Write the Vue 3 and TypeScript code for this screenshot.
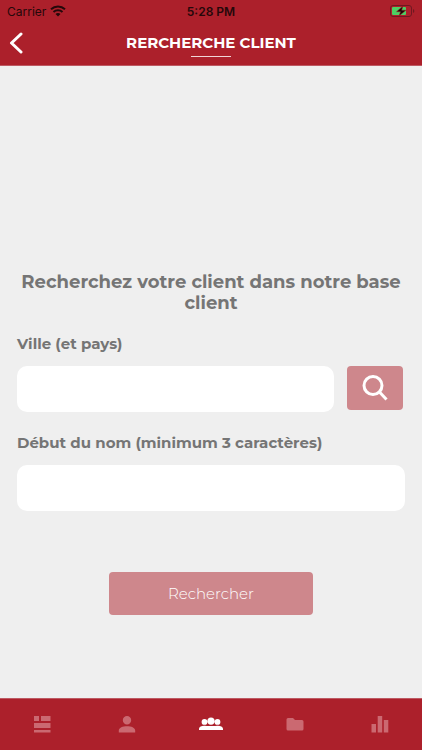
<script setup lang="ts">
import { ref } from 'vue'

interface Tab {
  id: string
  label: string
  path: string
}

const tabs: Tab[] = [
  { id: 'news', label: 'Actualités', path: 'M4 4h5v5H4zM11 4h9.500v5H11zM4 11h16.500v5H4zM4 18h16.500v2.500H4z' },
  {
    id: 'profile',
    label: 'Profil',
    path: 'M12 4a4.200 4.200 0 1 1 0 8.400a4.200 4.200 0 0 1 0-8.400zM3.800 20.500v-2c0-2.800 4-4.300 8.200-4.300s8.200 1.500 8.200 4.300v2z',
  },
  {
    id: 'clients',
    label: 'Clients',
    path: 'M12 5.500a3.600 3.600 0 1 1 0 7.200a3.600 3.600 0 0 1 0-7.200zM5.500 7a2.900 2.900 0 1 1 0 5.800a2.900 2.900 0 0 1 0-5.800zM18.500 7a2.900 2.900 0 1 1 0 5.800a2.900 2.900 0 0 1 0-5.800zM0 18v-1.300C0 14.500 3 13.500 5.800 13.700C7.600 14.100 9.500 14 12 14s4.400.1 6.200-.3C21 13.500 24 14.500 24 16.700V18z',
  },
  {
    id: 'folders',
    label: 'Dossiers',
    path: 'M5 6h5l2 2h7a1.500 1.500 0 0 1 1.500 1.500v7.500a1.500 1.500 0 0 1-1.500 1.500H5A1.500 1.500 0 0 1 3.500 17V7.500A1.500 1.500 0 0 1 5 6z',
  },
  { id: 'stats', label: 'Statistiques', path: 'M3.500 12H8v8.500H3.500zM9.700 4h4.500v16.500H9.700zM15.800 8h4.500v12.500h-4.500z' },
]

const activeTab = ref('clients')
const city = ref('')
const clientName = ref('')
</script>

<template>
  <div class="screen">
    <header class="header">
      <div class="status">
        <span class="carrier">
          Carrier
          <svg class="wifi" viewBox="0 0 16 12" aria-hidden="true">
            <path d="M1 4.200C5 .5 11 .5 15 4.200" />
            <path d="M3.500 7C6 4.700 10 4.700 12.500 7" />
            <path class="solid" d="M5.500 9C7 7.700 9 7.700 10.500 9L8 11.600z" />
          </svg>
        </span>
        <time class="clock">5:28 PM</time>
        <svg class="battery" viewBox="0 0 25 12" aria-hidden="true">
          <rect class="shell" x=".5" y=".5" width="21" height="11" rx="2.500" />
          <rect class="charge" x="2" y="2" width="14" height="8" rx="1" />
          <path class="cap" d="M23 4v4c1.800-.6 1.800-3.400 0-4z" />
          <path class="bolt" d="M13 1L6.500 6.700h4L9 11l7-5.800h-4.300z" />
        </svg>
      </div>
      <div class="titlebar">
        <button class="back" type="button" aria-label="Retour">
          <svg viewBox="0 0 14 22" aria-hidden="true"><path d="M12 2L2.500 11l9.500 9" /></svg>
        </button>
        <h1 class="title">RERCHERCHE CLIENT</h1>
      </div>
    </header>

    <main class="content">
      <form class="form" @submit.prevent>
        <h2 class="intro">Recherchez votre client dans notre base client</h2>
        <div class="field">
          <label for="city">Ville (et pays)</label>
          <div class="row">
            <input id="city" v-model="city" type="text" />
            <button class="lookup" type="button" aria-label="Chercher la ville">
              <svg viewBox="0 0 26 26" aria-hidden="true">
                <circle cx="11" cy="10.500" r="9" />
                <path d="M17.500 17l7 7.500" />
              </svg>
            </button>
          </div>
        </div>
        <div class="field">
          <label for="name">Début du nom (minimum 3 caractères)</label>
          <input id="name" v-model="clientName" type="text" />
        </div>
        <button class="submit" type="submit">Rechercher</button>
      </form>
    </main>

    <nav class="tabs">
      <button
        v-for="tab in tabs"
        :key="tab.id"
        type="button"
        class="tab"
        :class="{ active: tab.id === activeTab }"
        :aria-label="tab.label"
        @click="activeTab = tab.id"
      >
        <svg viewBox="0 0 24 24" aria-hidden="true"><path :d="tab.path" /></svg>
      </button>
    </nav>
  </div>
</template>

<style>
body {
  margin: 0;
}
</style>

<style scoped>
.screen {
  display: flex;
  flex-direction: column;
  min-height: 100vh;
  background: #efefef;
  color: #757575;
  font-family: Montserrat, Inter, sans-serif;
}

button {
  padding: 0;
  border: 0;
  background: none;
  font: inherit;
  cursor: pointer;
}

svg {
  display: block;
  fill: none;
}

.header {
  background: #ac202b;
  border-bottom: 1px solid #bd5962;
}

.status {
  display: grid;
  grid-template-columns: 1fr auto 1fr;
  align-items: center;
  height: 22px;
  padding: 0 7px;
  color: #25080a;
  font-family: Inter, sans-serif;
  font-size: 12px;
}

.carrier {
  display: flex;
  align-items: center;
  gap: 4px;
}

.wifi {
  width: 16px;
  height: 12px;
  stroke: #25080a;
  stroke-width: 2;
}

.wifi .solid {
  fill: #25080a;
  stroke: none;
}

.clock {
  font-weight: 600;
}

.battery {
  justify-self: end;
  width: 25px;
  height: 12px;
}

.shell {
  stroke: #701820;
}

.charge {
  fill: #4cd063;
}

.cap {
  fill: #701820;
}

.bolt {
  fill: #170606;
  stroke: #ac202b;
  stroke-width: 0.5;
}

.titlebar {
  display: grid;
  grid-template-columns: 32px 1fr 32px;
  align-items: center;
  height: 43px;
}

.back {
  display: flex;
  align-items: center;
  justify-content: center;
  height: 43px;
  padding-bottom: 2px;
}

.back svg {
  width: 14px;
  height: 22px;
  stroke: #fff;
  stroke-width: 3;
  stroke-linecap: round;
  stroke-linejoin: round;
}

.title {
  display: flex;
  flex-direction: column;
  align-items: center;
  gap: 3px;
  margin: 0;
  padding-top: 3px;
  color: #fff;
  font-size: 15px;
  font-weight: 700;
  line-height: 20px;
}

.title::after {
  content: '';
  width: 40px;
  height: 1px;
  background: #f1d5d7;
}

.content {
  flex: 1;
  padding: 206px 17px 80px;
}

.form {
  display: flex;
  flex-direction: column;
}

.intro {
  margin: 0 0 19px;
  font-size: 18px;
  font-weight: 700;
  line-height: 21px;
  text-align: center;
}

.field {
  display: flex;
  flex-direction: column;
  gap: 12px;
  margin-bottom: 20px;
}

label {
  font-size: 15px;
  font-weight: 700;
  line-height: 21px;
}

.row {
  display: flex;
  gap: 13px;
  padding-right: 2px;
}

input {
  flex: 1;
  box-sizing: border-box;
  min-width: 0;
  min-height: 46px;
  padding: 0 12px;
  border: 0;
  border-radius: 10px;
  background: #fff;
  color: #757575;
  font: inherit;
}

.lookup {
  display: flex;
  align-items: center;
  justify-content: center;
  width: 56px;
  height: 44px;
  border-radius: 4px;
  background: #ce878c;
}

.lookup svg {
  width: 26px;
  height: 26px;
  stroke: #fff;
  stroke-width: 3;
}

.submit {
  align-self: center;
  width: 204px;
  height: 43px;
  margin-top: 41px;
  border-radius: 4px;
  background: #ce878c;
  color: #fff;
  font-size: 15px;
  font-weight: 300;
}

.tabs {
  display: grid;
  grid-template-columns: repeat(5, 1fr);
  height: 51px;
  border-top: 1px solid #bd5962;
  background: #ac202b;
}

.tab {
  display: flex;
  align-items: center;
  justify-content: center;
  padding-bottom: 2px;
}

.tab svg {
  width: 24px;
  height: 24px;
  fill: #cb6971;
}

.tab.active svg {
  fill: #fff;
}
</style>
